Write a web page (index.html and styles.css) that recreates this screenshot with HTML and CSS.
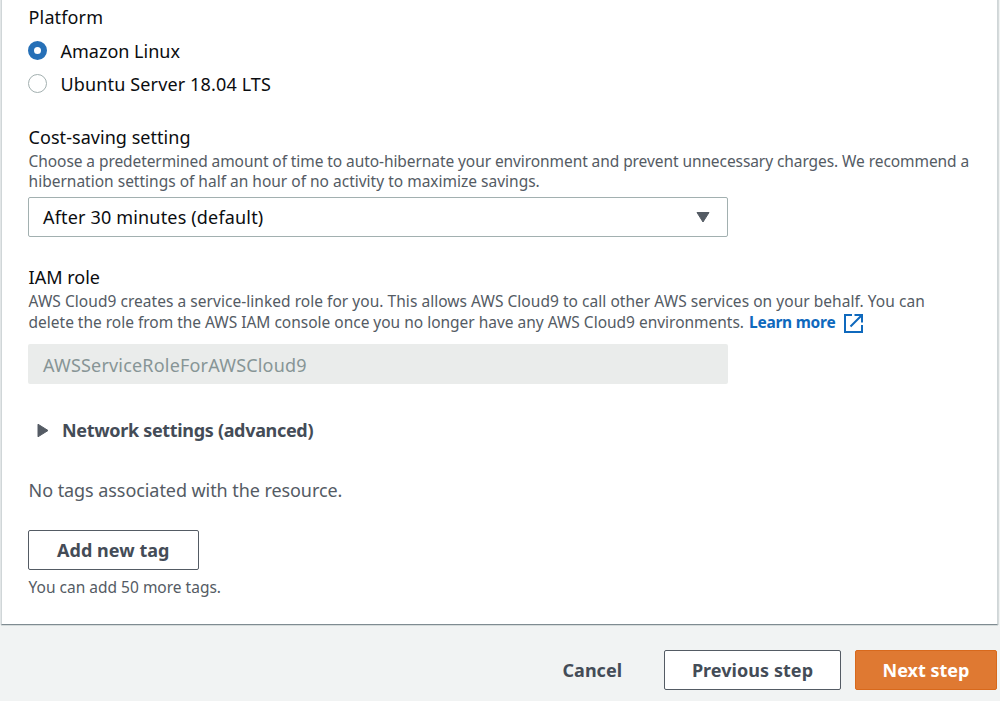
FILE: index.html
```html
<!DOCTYPE html>
<html lang="en">
<head>
<meta charset="utf-8">
<title>Configure settings</title>
<link rel="stylesheet" href="styles.css">
</head>
<body>
<main class="card">
  <section class="platform">
    <h2 class="label"><span class="t-platform">Platform</span></h2>
    <label class="option"><i class="radio radio-on"></i><span class="t-amazon">Amazon Linux</span></label>
    <label class="option"><i class="radio"></i><span class="t-ubuntu">Ubuntu Server 18.04 LTS</span></label>
  </section>
  <section class="saving">
    <h2 class="label"><span class="t-saving">Cost-saving setting</span></h2>
    <p class="help"><span class="t-help1">Choose a predetermined amount of time to auto-hibernate your environment and prevent unnecessary charges. We recommend a</span><br><span class="t-help2">hibernation settings of half an hour of no activity to maximize savings.</span></p>
    <div class="select"><span class="t-after">After 30 minutes (default)</span>
      <svg class="caret" width="14" height="12" viewBox="0 0 14 12"><path d="M1 1.500h12L7 11z" fill="#545b64" stroke="#545b64" stroke-linejoin="round"/></svg>
    </div>
  </section>
  <section class="role">
    <h2 class="label"><span class="t-iam">IAM role</span></h2>
    <p class="help help-role"><span class="t-role1">AWS Cloud9 creates a service-linked role for you. This allows AWS Cloud9 to call other AWS services on your behalf. You can</span><br><span class="t-role2">delete the role from the AWS IAM console once you no longer have any AWS Cloud9 environments.</span><a class="learn"><span class="t-learn">Learn more</span><svg class="ext" width="19" height="19" viewBox="0 0 19 19" fill="none" stroke="#0f69bd" stroke-width="2"><path d="M8 1H1v17h17v-7M10.500 1H18v7.500M17.500 1.500L6.500 12.500"/></svg></a></p>
    <div class="input"><span class="t-input">AWSServiceRoleForAWSCloud9</span></div>
  </section>
  <div class="network">
    <svg width="13" height="15" viewBox="0 0 13 15"><path d="M1 1.200v12.600L11 7.500z" fill="#545b64" stroke="#545b64" stroke-linejoin="round"/></svg>
    <span class="t-network">Network settings (advanced)</span>
  </div>
  <p class="empty"><span class="t-empty">No tags associated with the resource.</span></p>
  <button class="btn add"><span class="t-add">Add new tag</span></button>
  <p class="hint"><span class="t-hint">You can add 50 more tags.</span></p>
</main>
<footer class="actions">
  <button class="link"><span class="t-cancel">Cancel</span></button>
  <button class="btn prev"><span class="t-prev">Previous step</span></button>
  <button class="btn next"><span class="t-next">Next step</span></button>
</footer>
</body>
</html>
```
FILE: styles.css
```css
* { box-sizing: border-box; }
body { margin: 0; height: 701px; overflow: hidden; background: #f1f3f3; font: 18px/24px "Noto Sans", sans-serif; color: #0b0d10; }
h2, p { margin: 0; font-weight: 400; white-space: nowrap; }
.card { width: 997px; height: 625px; margin-left: 1px; background: #fff; border: 1px solid #d0d6d8; border-width: 0 1px 1px 1px; border-bottom-color: #7f8b91; box-shadow: 0 1px 0 #d5dbdb, 1px 0 0 #d5dbdb, -1px 0 0 #e2e6e7; padding: 5px 0 0 26px; }
.label { font-size: 18px; line-height: 24px; height: 24px; }
.label, .help, .empty, .hint { padding-left: 0.6px; }
.option { display: flex; align-items: center; gap: 13.500px; height: 33px; white-space: nowrap; }
.platform .label { margin-bottom: 5px; }
.radio { width: 19px; height: 19px; border-radius: 50%; border: 1px solid #a3b0b0; background: #fff; }
.radio-on { border: 6px solid #2670b7; }
.saving { margin-top: 25px; }
.help { font-size: 15.500px; line-height: 20px; color: #545b64; height: 48px; padding-top: 2px; }
.select, .input { width: 700px; height: 40px; border-radius: 2px; padding: 0 17px 0 14px; display: flex; align-items: center; justify-content: space-between; }
.select { border: 1px solid #a2b0b0; }
.role { margin-top: 28px; }
.help-role { line-height: 21px; padding-top: 2px; height: 55px; }
.learn { color: #0f69bd; font-weight: 700; margin-left: 5px; }
.ext { vertical-align: -4px; margin: -3px 0 -3px 9px; transform: translateY(-2px); }
.input { background: #eaeceb; color: #879596; padding: 2px 0 0 15px; }
.network { display: flex; align-items: center; gap: 12px; margin: 34px 0 0 9px; height: 24px; font-weight: 700; color: #444c57; white-space: nowrap; }
.empty { color: #545b64; margin-top: 36px; height: 24px; }
.btn { display: flex; align-items: center; justify-content: center; height: 40px; border: 1px solid #545b64; border-radius: 2px; background: #fff; }
button { font: 700 18px/24px "Noto Sans", sans-serif; color: #444c57; padding: 0; white-space: nowrap; }
.add { width: 170.500px; margin-top: 28px; }
.hint { font-size: 15.500px; line-height: 20px; color: #545b64; margin-top: 7px; }
.actions { display: flex; justify-content: flex-end; align-items: center; height: 40px; margin: 25px 3px 0 0; }
.link { background: none; border: 0; margin-right: 42px; }
.prev { width: 177px; margin-right: 14px; }
.next { width: 142px; background: #df7932; border-color: #d8691c; color: #fff; }

/* tracking per text run */
.t-platform { letter-spacing: 0.130px; }
.t-ubuntu { letter-spacing: 0.140px; }
.t-saving { letter-spacing: 0.040px; }
.t-help1 { letter-spacing: -0.080px; }
.t-after { letter-spacing: 0.170px; }
.t-role1 { letter-spacing: 0.038px; }
.t-role2 { letter-spacing: -0.015px; }
.t-learn { letter-spacing: -0.250px; }
.t-input { letter-spacing: 0.190px; }
.t-network { letter-spacing: -0.320px; }
.t-empty { letter-spacing: -0.070px; }
.t-add, .t-prev { letter-spacing: 0.050px; }
```
